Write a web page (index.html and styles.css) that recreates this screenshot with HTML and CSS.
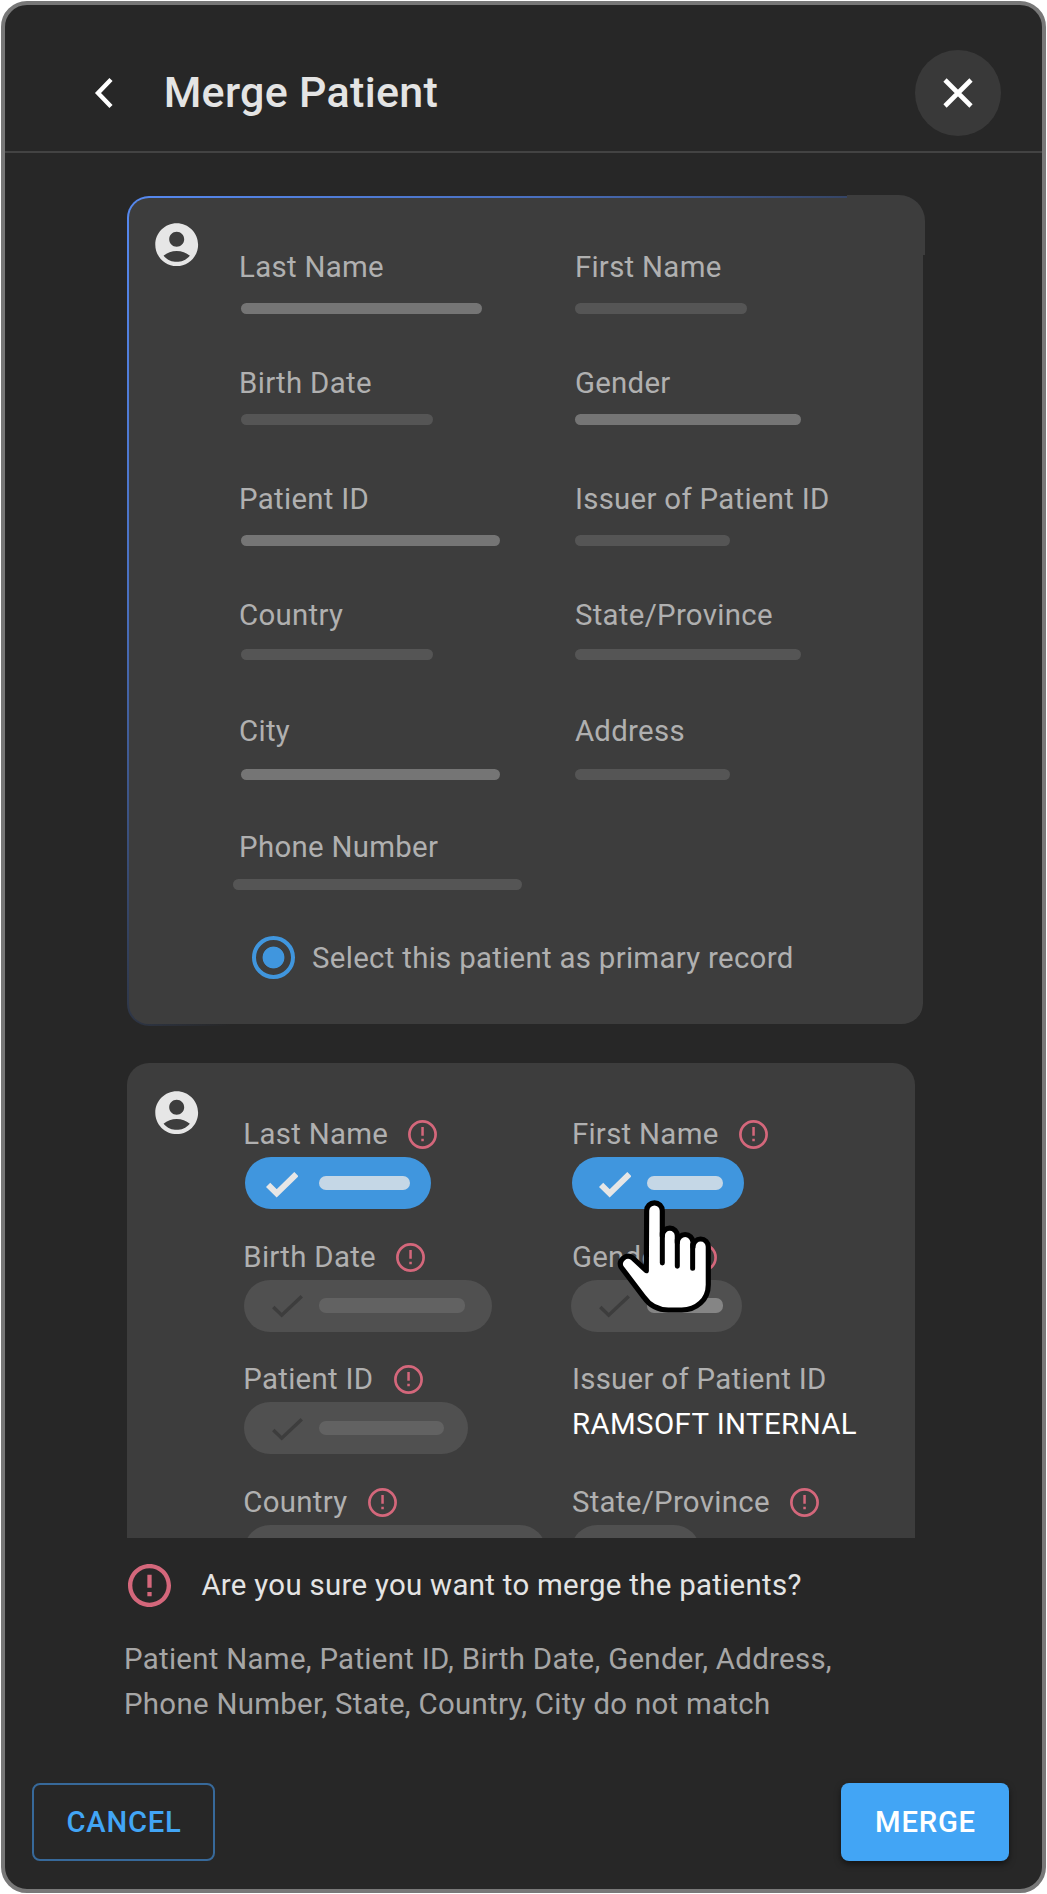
FILE: index.html
```html
<!DOCTYPE html>
<html lang="en">
<head>
<meta charset="utf-8">
<title>Merge Patient</title>
<link rel="stylesheet" href="styles.css">
</head>
<body>
<svg class="defs" aria-hidden="true">
  <symbol id="account" viewBox="0 0 24 24"><path d="M12 2C6.48 2 2 6.48 2 12s4.48 10 10 10 10-4.48 10-10S17.52 2 12 2zm0 4c1.93 0 3.5 1.57 3.5 3.5S13.93 13 12 13s-3.5-1.57-3.5-3.5S10.07 6 12 6zm0 14c-2.03 0-4.43-.82-6.14-2.88C7.55 15.8 9.68 15 12 15s4.45.8 6.14 2.12C16.43 19.18 14.03 20 12 20z"/></symbol>
  <symbol id="alert" viewBox="2 2 20 20"><path d="M11 15h2v2h-2zm0-8h2v6h-2zm.99-5C6.47 2 2 6.48 2 12s4.47 10 9.99 10C17.52 22 22 17.52 22 12S17.52 2 11.99 2zM12 20c-4.42 0-8-3.58-8-8s3.58-8 8-8 8 3.580 8 8-3.580 8-8 8z"/></symbol>
  <symbol id="alert-thin" viewBox="0 0 29 29"><circle cx="14.5" cy="14.5" r="13.1" fill="none" stroke="currentColor" stroke-width="2.7"/><path d="M13.3 7h2.500v8.800h-2.500zM13.300 18.700h2.500v2.600h-2.500z"/></symbol>
  <symbol id="check-bold" viewBox="0 0 32.5 26"><path d="M2.1 12.8 10.7 21.4 30.4 2.1" fill="none" stroke="currentColor" stroke-width="6"/></symbol>
  <symbol id="check-thin" viewBox="0 0 31 23"><path d="M1.3 12 9.7 20.2 29.8 1.3" fill="none" stroke="currentColor" stroke-width="3.5"/></symbol>
</svg>
<main class="dialog">
  <header class="header">
    <svg class="back" viewBox="0 0 19 32"><path d="M17 2.5 4 16 17 29.5" fill="none" stroke="#fff" stroke-width="4.4"/></svg>
    <h1 class="title">Merge Patient</h1>
    <button class="close" aria-label="Close"><svg viewBox="0 0 30 30"><path d="M2 2 28 28M28 2 2 28" fill="none" stroke="#fff" stroke-width="4.6"/></svg></button>
  </header>

  <section class="list">
    <article class="card primary">
      <svg class="avatar"><use href="#account"/></svg>
      <div class="body">
        <div class="fields">
          <div class="field gap-l"><span class="label">Last Name</span><span class="bar strong" style="width:240.500px"></span></div>
          <div class="field gap-l"><span class="label">First Name</span><span class="bar" style="width:171.800px"></span></div>
          <div class="field gap-xs"><span class="label">Birth Date</span><span class="bar" style="width:192px"></span></div>
          <div class="field gap-xs"><span class="label">Gender</span><span class="bar strong" style="width:226px"></span></div>
          <div class="field gap-l"><span class="label">Patient ID</span><span class="bar strong" style="width:259px"></span></div>
          <div class="field gap-l"><span class="label">Issuer of Patient ID</span><span class="bar" style="width:155px"></span></div>
          <div class="field gap-m"><span class="label">Country</span><span class="bar" style="width:192px"></span></div>
          <div class="field gap-m"><span class="label">State/Province</span><span class="bar" style="width:226px"></span></div>
          <div class="field gap-xl"><span class="label">City</span><span class="bar strong" style="width:259px"></span></div>
          <div class="field gap-xl"><span class="label">Address</span><span class="bar" style="width:155px"></span></div>
          <div class="field gap-s outdent"><span class="label">Phone Number</span><span class="bar" style="width:289px"></span></div>
        </div>
        <label class="choice"><span class="radio"></span>Select this patient as primary record</label>
      </div>
    </article>

    <article class="card secondary">
      <svg class="avatar"><use href="#account"/></svg>
      <div class="body">
        <div class="fields">
          <div class="field">
            <span class="label">Last Name<svg class="alert"><use href="#alert-thin"/></svg></span>
            <span class="pill on" style="width:186px"><svg class="check"><use href="#check-bold"/></svg><span class="value" style="width:91px"></span></span>
          </div>
          <div class="field pointed">
            <span class="label">First Name<svg class="alert"><use href="#alert-thin"/></svg></span>
            <span class="pill on" style="width:172px"><svg class="check"><use href="#check-bold"/></svg><span class="value" style="width:76px"></span></span>
            <svg class="cursor" viewBox="225 445 295 350">
              <path class="hand" d="M319 663 277 624A23 23 0 0 0 243 652L312 743Q338 781 385 781H425C470 781 505 750 505 705V591A23 23 0 0 0 459 591V578A23.500 23.500 0 0 0 412 578V558A22.500 22.500 0 0 0 367 558V483A23.500 23.500 0 0 0 320 483Z"/>
              <path class="hand-lines" d="M367 550V640M412 570V650M458 585V656"/>
            </svg>
          </div>
          <div class="field">
            <span class="label">Birth Date<svg class="alert"><use href="#alert-thin"/></svg></span>
            <span class="pill" style="width:248px"><svg class="check"><use href="#check-thin"/></svg><span class="value" style="width:146px"></span></span>
          </div>
          <div class="field">
            <span class="label">Gender<svg class="alert"><use href="#alert-thin"/></svg></span>
            <span class="pill" style="width:171px"><svg class="check"><use href="#check-thin"/></svg><span class="value bright" style="width:76px"></span></span>
          </div>
          <div class="field">
            <span class="label">Patient ID<svg class="alert"><use href="#alert-thin"/></svg></span>
            <span class="pill" style="width:224px"><svg class="check"><use href="#check-thin"/></svg><span class="value" style="width:125px"></span></span>
          </div>
          <div class="field">
            <span class="label">Issuer of Patient ID</span>
            <span class="plain">RAMSOFT INTERNAL</span>
          </div>
          <div class="field">
            <span class="label">Country<svg class="alert"><use href="#alert-thin"/></svg></span>
            <span class="pill" style="width:302px"></span>
          </div>
          <div class="field">
            <span class="label">State/Province<svg class="alert"><use href="#alert-thin"/></svg></span>
            <span class="pill" style="width:129px"></span>
          </div>
        </div>
      </div>
    </article>
  </section>

  <footer class="footer">
    <p class="question"><svg class="alert-large"><use href="#alert"/></svg><span class="question-text">Are you sure you want to merge the patients?</span></p>
    <p class="detail">Patient Name, Patient ID, Birth Date, Gender, Address,<br>Phone Number, State, Country, City do not match</p>
    <div class="actions">
      <button class="btn outlined">CANCEL</button>
      <button class="btn filled">MERGE</button>
    </div>
  </footer>
</main>
</body>
</html>
```
FILE: styles.css
```css
* { box-sizing: border-box; }

body {
  margin: 0;
  background: #fff;
  font-family: Roboto, "Liberation Sans", sans-serif;
  font-size: 29.4px;
  letter-spacing: 0.3px;
  color: #b0b0b0;
}

svg { display: block; flex: none; fill: currentColor; }
h1, p { margin: 0; }
button { font: inherit; padding: 0; border: 0; }
.defs { position: absolute; width: 0; height: 0; }

.dialog {
  width: 1045px;
  height: 1892px;
  margin: 1px;
  border: 4px solid #787878;
  border-radius: 26px;
  background: #272727;
  overflow: hidden;
  display: flex;
  flex-direction: column;
}

/* Header */
.header {
  flex: none;
  height: 148px;
  padding: 45px 41px 15px 89px;
  border-bottom: 2px solid #434343;
  display: flex;
  align-items: center;
}
.back { width: 19px; height: 32px; }
.title {
  margin: -3px 0 0 50.7px;
  font-size: 43px;
  line-height: 50px;
  font-weight: 500;
  color: #e4e4e4;
}
.close {
  width: 86px;
  height: 86px;
  margin-left: auto;
  border-radius: 50%;
  background: #393939;
  display: grid;
  place-items: center;
}
.close svg { width: 30px; height: 30px; }

/* Patient cards */
.list {
  flex: none;
  height: 1385px;
  padding: 43px 0 0 122px;
  overflow: hidden;
}
.card {
  position: relative;
  display: flex;
  align-items: flex-start;
}
.avatar { width: 51.4px; height: 51.4px; color: #e6e6e6; }
.fields { display: grid; }
.field { position: relative; }
.label {
  display: flex;
  align-items: center;
  height: 34px;
  line-height: 34px;
  white-space: nowrap;
}

.primary {
  width: 796px;
  height: 830px;
  border: 2px solid transparent;
  border-right: 0;
  border-radius: 22px;
  background:
    linear-gradient(#3d3d3d, #3d3d3d) padding-box,
    linear-gradient(135deg, #5689f0 0, #4a70c0 290px, #272727 660px) border-box;
}
/* Raised corner where the gradient outline stops */
.primary::before {
  content: "";
  position: absolute;
  top: -3px;
  right: -2px;
  width: 78px;
  height: 60px;
  border-radius: 0 26px 0 0;
  background: #3d3d3d;
}
.primary .avatar { margin: 21.300px 36.900px 0 21.800px; }
.primary .body { padding-top: 52px; }
.primary .fields {
  grid-template-columns: 335.800px 300px;
  grid-template-rows: repeat(5, 116px) 86px;
}
.bar {
  display: block;
  height: 11px;
  margin-left: 2px;
  border-radius: 6px;
  background: #555;
}
.field:nth-child(even) .bar { margin-left: 0.3px; }
.field.outdent .bar { margin-left: -6px; }
.bar.strong { background: #757575; }
.gap-xs .bar { margin-top: 14px; }
.gap-s .bar { margin-top: 15px; }
.gap-m .bar { margin-top: 17px; }
.gap-l .bar { margin-top: 19.400px; }
.gap-xl .bar { margin-top: 21px; }

.choice {
  display: flex;
  align-items: center;
  gap: 17.500px;
  height: 43px;
  margin: 20px 0 0 12.500px;
}
.radio {
  width: 43px;
  height: 43px;
  border: 4.500px solid #4096de;
  border-radius: 50%;
  background: radial-gradient(circle, #4096de 10.500px, transparent 11.300px);
}

.secondary {
  width: 788px;
  height: 560px;
  margin-top: 37px;
  border-radius: 22px;
  background: #3d3d3d;
}
.secondary .avatar { margin: 23.800px 41.100px 0 23.800px; }
.secondary .body { padding-top: 54px; }
.secondary .fields {
  grid-template-columns: 328.600px 300px;
  grid-auto-rows: 122.600px;
}
.alert { width: 29px; height: 29px; margin: 1px 0 0 20.200px; color: #d4677b; }
.pill {
  display: flex;
  align-items: center;
  height: 52px;
  margin: 6px 0 0 0.7px;
  padding-left: 28px;
  gap: 16px;
  border-radius: 26px;
  background: #505050;
  color: #3d3d3d;
}
.field:nth-child(even) .pill { margin-left: -0.6px; gap: 17px; }
.pill .check { width: 31px; height: 23px; margin-top: 2px; }
.value { height: 14.500px; border-radius: 7px; background: #626262; }
.value.bright { background: #858585; }
.pill.on { margin-left: 2px; padding-left: 20.400px; gap: 20.800px; background: #4096de; color: #e6e6e6; }
.pill.on .check { width: 32.500px; height: 26px; margin-top: 4px; }
.pill.on .value { background: #c5d7e6; }
.field:nth-child(even) .pill.on { margin-left: 0.2px; padding-left: 26.700px; gap: 15.800px; }
.plain {
  display: block;
  margin-top: 11px;
  line-height: 34px;
  letter-spacing: 0.42px;
  color: #fff;
  white-space: nowrap;
}

/* Pointer over the First Name chip */
.pointed { z-index: 1; }
.cursor {
  position: absolute;
  left: 43.100px;
  top: 81.300px;
  width: 98.300px;
  height: 116.700px;
}
.hand { fill: #fff; stroke: #000; stroke-width: 15.500; stroke-linejoin: round; }
.hand-lines { fill: none; stroke: #000; stroke-width: 15; stroke-linecap: round; }

/* Footer */
.footer { padding: 26px 33px 0 27px; }
.question {
  display: flex;
  align-items: center;
  gap: 30.400px;
  height: 43px;
  margin-left: 96px;
  color: #e4e4e4;
}
.question-text { margin-top: -2px; }
.alert-large { width: 43px; height: 43px; color: #d4677b; }
.detail { margin: 29.500px 0 0 92px; line-height: 45px; color: #a6a6a6; }
.actions { display: flex; justify-content: space-between; margin-top: 56.500px; }
.btn {
  height: 78px;
  border-radius: 8px;
  font-size: 29.200px;
  font-weight: 500;
  letter-spacing: 0.8px;
}
.outlined { width: 183px; padding-left: 1px; border: 2px solid #37699a; background: none; color: #42a5f5; }
.filled {
  width: 168px;
  padding-left: 1px;
  background: #42a5f5;
  color: #fff;
  box-shadow: 0 3px 6px rgba(0, 0, 0, 0.5);
}
```
